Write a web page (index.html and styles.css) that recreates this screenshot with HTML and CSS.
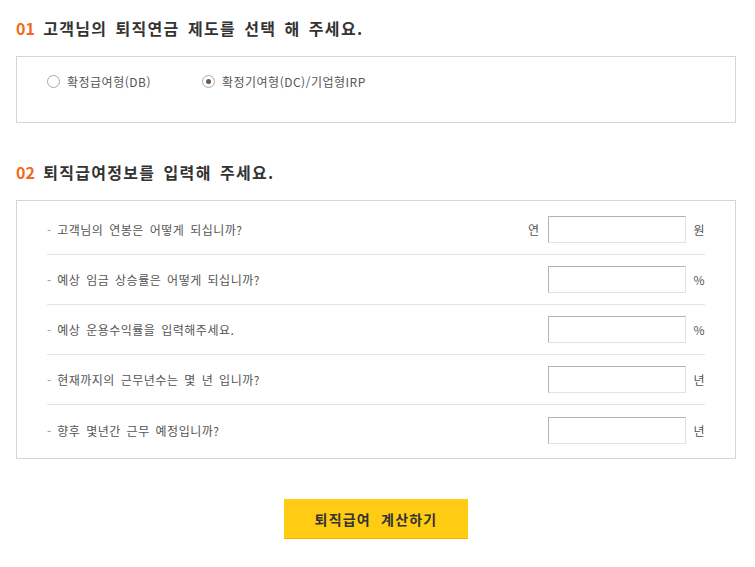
FILE: index.html
```html
<!DOCTYPE html>
<html lang="ko">
<head>
<meta charset="utf-8">
<title>퇴직급여 계산</title>
<link rel="stylesheet" href="styles.css">
</head>
<body>
<div class="wrap">
  <h2 class="title first"><span class="num">01</span> 고객님의 퇴직연금 제도를 선택 해 주세요.</h2>
  <div class="box radios">
    <label class="radio"><span class="dot"></span>확정급여형(DB)</label>
    <label class="radio checked"><span class="dot"></span>확정기여형(DC)/기업형IRP</label>
  </div>

  <h2 class="title second"><span class="num">02</span> 퇴직급여정보를 입력해 주세요.</h2>
  <div class="box form">
    <div class="row">
      <span class="q"><span class="dash">-</span>고객님의 연봉은 어떻게 되십니까?</span>
      <span class="field"><span class="pre">연</span><input class="inp" type="text"><span class="unit">원</span></span>
    </div>
    <div class="row">
      <span class="q"><span class="dash">-</span>예상 임금 상승률은 어떻게 되십니까?</span>
      <span class="field"><input class="inp" type="text"><span class="unit">%</span></span>
    </div>
    <div class="row">
      <span class="q"><span class="dash">-</span>예상 운용수익률을 입력해주세요.</span>
      <span class="field"><input class="inp" type="text"><span class="unit">%</span></span>
    </div>
    <div class="row">
      <span class="q"><span class="dash">-</span>현재까지의 근무년수는 몇 년 입니까?</span>
      <span class="field"><input class="inp" type="text"><span class="unit">년</span></span>
    </div>
    <div class="row last">
      <span class="q"><span class="dash">-</span>향후 몇년간 근무 예정입니까?</span>
      <span class="field"><input class="inp" type="text"><span class="unit">년</span></span>
    </div>
  </div>

  <div class="btns"><button class="calc" type="button">퇴직급여 계산하기</button></div>
</div>
</body>
</html>
```

FILE: styles.css
```css
html, body {
  margin: 0;
  padding: 0;
  background: #fff;
}
body {
  font-family: "Noto Sans CJK KR", "Noto Sans", sans-serif;
  color: #555;
}
.wrap {
  width: 720px;
  margin-left: 16px;
}
.title {
  font-size: 16px;
  line-height: 20px;
  font-weight: bold;
  color: #333;
  margin: 18px 0 18px;
  letter-spacing: 1.3px;
  word-spacing: 2.5px;
}
.title.second {
  margin-top: 39px;
}
.num {
  color: #f26a1b;
  letter-spacing: 0;
}
.box {
  border: 1px solid #d5d5d5;
  box-sizing: border-box;
}
.radios {
  display: flex;
  height: 67px;
  padding: 14px 30px 0;
}
.radio {
  display: flex;
  align-items: center;
  height: 20px;
  font-size: 12px;
  color: #555;
  letter-spacing: 0.5px;
  margin-right: 51px;
}
.radio .dot {
  width: 13px;
  height: 13px;
  border: 1px solid #a9a9a9;
  border-radius: 50%;
  box-sizing: border-box;
  background: #fff;
  margin-right: 7px;
  position: relative;
}
.radio.checked .dot::after {
  content: "";
  position: absolute;
  left: 3px;
  top: 3px;
  width: 5px;
  height: 5px;
  border-radius: 50%;
  background: #6a5a52;
}
.form {
  padding: 4px 30px 3px;
}
.row {
  display: flex;
  align-items: center;
  justify-content: space-between;
  height: 50px;
  box-sizing: border-box;
  border-bottom: 1px solid #e4e4e4;
  font-size: 12px;
}
.row.last {
  border-bottom: none;
}
.q {
  color: #555;
  letter-spacing: 0.5px;
  word-spacing: 2px;
}
.dash {
  color: #999;
  margin-right: 6px;
  letter-spacing: 0;
}
.field {
  display: flex;
  align-items: center;
}
.pre {
  margin-right: 9px;
  color: #555;
}
.inp {
  width: 138px;
  height: 27px;
  box-sizing: border-box;
  border: 1px solid;
  border-color: #b3b3b3 #e2e2e2 #e2e2e2 #b3b3b3;
  padding: 0 4px;
  margin: 0;
  font-size: 12px;
  outline: none;
}
.unit {
  width: 12px;
  margin-left: 7px;
  text-align: center;
  color: #555;
}
.btns {
  display: flex;
  justify-content: center;
  margin-top: 40px;
}
.calc {
  width: 184px;
  height: 40px;
  border: none;
  border-bottom: 1px solid #f0b400;
  background: #ffcc13;
  color: #333;
  font-family: "Noto Sans CJK KR", sans-serif;
  font-size: 14px;
  font-weight: bold;
  letter-spacing: 1.2px;
  word-spacing: 5px;
  cursor: pointer;
  padding: 0;
}
```
